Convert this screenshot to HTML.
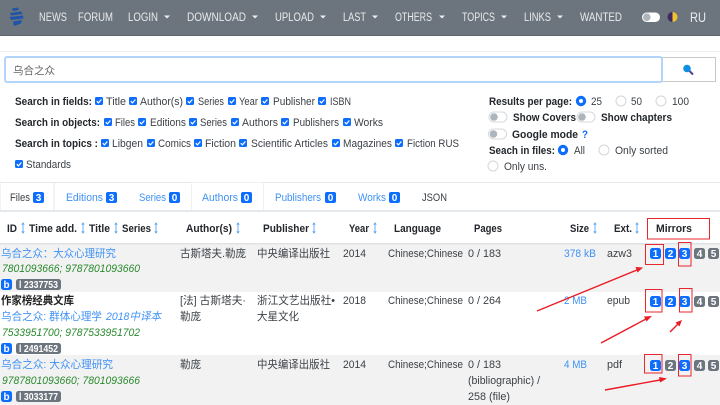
<!DOCTYPE html>
<html lang="zh">
<head>
<meta charset="utf-8">
<title>Library search</title>
<style>
html,body{margin:0;padding:0;background:#fff;width:720px;height:405px;overflow:hidden}
svg{display:block}
text{font-family:"Liberation Sans","Noto Sans CJK SC",sans-serif;font-size:11px;fill:#3c4146}
.n{fill:#e9ebed;font-size:11.5px}
.b{font-weight:bold;fill:#23272b}
.l{fill:#3f92f5}
.g{fill:#2a8a2f;font-style:italic}
.w{fill:#fff;font-weight:bold;font-size:10px;text-anchor:middle}
.h{fill:#3f92f5}
</style>
</head>
<body>
<svg width="720" height="405" viewBox="0 0 720 405" xmlns="http://www.w3.org/2000/svg">
<defs>
<g id="cb"><rect width="8" height="8" rx="1.5" fill="#0d6efd"/><path d="M1.8 4.2l1.6 1.7 3-3.4" stroke="#fff" stroke-width="1.2" fill="none"/></g>
<g id="s"><path d="M0 -5V5M-1.300 -3.400L0 -5L1.300 -3.400M-1.300 3.400L0 5L1.300 3.400" stroke="#5aa5f5" stroke-width="0.9" fill="none"/></g>
<g id="on"><circle r="5.2" fill="#0d6efd"/><circle r="2" fill="#fff"/></g>
<g id="off"><circle r="5" fill="#fff" stroke="#d4d6d9"/></g>
<g id="t"><rect width="18" height="10" rx="5" fill="#fff" stroke="#d6d8db"/><circle cx="5" cy="5" r="3.8" fill="#adb5bd"/></g>
</defs>

<!-- navbar -->
<rect width="720" height="35" fill="#6c757d"/>
<rect y="35" width="720" height="1" fill="#5f676e"/>
<path d="M12 8.5L18 7.5L19 10L13 11ZM10 13L21 11.5L22.5 14L11 15.5ZM9.5 17L23 15.5L23.5 18.5L11 20ZM13 21.5L22 20L21 23.5L14 26Z" fill="#1f54a8"/>
<text class="n" x="39" y="21" textLength="28" lengthAdjust="spacingAndGlyphs">NEWS</text>
<text class="n" x="78" y="21" textLength="35" lengthAdjust="spacingAndGlyphs">FORUM</text>
<text class="n" x="128" y="21" textLength="30" lengthAdjust="spacingAndGlyphs">LOGIN</text>
<path d="M164 15.5h6l-3 3z" fill="#eee"/>
<text class="n" x="187" y="21" textLength="59" lengthAdjust="spacingAndGlyphs">DOWNLOAD</text>
<path d="M252 15.5h6l-3 3z" fill="#eee"/>
<text class="n" x="275" y="21" textLength="39" lengthAdjust="spacingAndGlyphs">UPLOAD</text>
<path d="M320 15.5h6l-3 3z" fill="#eee"/>
<text class="n" x="343" y="21" textLength="23" lengthAdjust="spacingAndGlyphs">LAST</text>
<path d="M372 15.5h6l-3 3z" fill="#eee"/>
<text class="n" x="395" y="21" textLength="37" lengthAdjust="spacingAndGlyphs">OTHERS</text>
<path d="M439 15.5h6l-3 3z" fill="#eee"/>
<text class="n" x="462" y="21" textLength="33" lengthAdjust="spacingAndGlyphs">TOPICS</text>
<path d="M501 15.5h6l-3 3z" fill="#eee"/>
<text class="n" x="524" y="21" textLength="27" lengthAdjust="spacingAndGlyphs">LINKS</text>
<path d="M557 15.5h6l-3 3z" fill="#eee"/>
<text class="n" x="580" y="21" textLength="42" lengthAdjust="spacingAndGlyphs">WANTED</text>
<rect x="642" y="12.500" width="18" height="9.500" rx="4.750" fill="#fff"/>
<circle cx="646.800" cy="17.200" r="3.800" fill="#adb5bd"/>
<path d="M672.500 12a5 5 0 0 0 0 10z" fill="#3d2a63"/>
<path d="M672.500 12a5 5 0 0 1 0 10z" fill="#f2c230"/>
<text class="n" x="690" y="22" textLength="16" lengthAdjust="spacingAndGlyphs" style="font-size:14px">RU</text>

<!-- search -->
<rect y="51" width="720" height="1" fill="#eeeeee"/>
<rect x="662.500" y="57.500" width="53" height="24" fill="#fff" stroke="#c9c9c9"/>
<rect x="5" y="57" width="657" height="25" rx="2" fill="#fff" stroke="#b4d5fb" stroke-width="2"/>
<text x="13" y="74" textLength="42" style="font-size:10.5px;fill:#666">乌合之众</text>
<path d="M689.500 71l3.500 3.500" stroke="#5b3f96" stroke-width="2"/>
<circle cx="687" cy="68.500" r="3.800" fill="#0f8fe0"/>

<!-- fields -->
<text class="b" x="15" y="105" textLength="77" lengthAdjust="spacingAndGlyphs">Search in fields:</text>
<use href="#cb" x="95" y="97"/><text x="106" y="105" textLength="20" lengthAdjust="spacingAndGlyphs">Title</text>
<use href="#cb" x="129" y="97"/><text x="140" y="105" textLength="43" lengthAdjust="spacingAndGlyphs">Author(s)</text>
<use href="#cb" x="186" y="97"/><text x="198" y="105" textLength="26" lengthAdjust="spacingAndGlyphs">Series</text>
<use href="#cb" x="228" y="97"/><text x="239" y="105" textLength="19" lengthAdjust="spacingAndGlyphs">Year</text>
<use href="#cb" x="261" y="97"/><text x="273" y="105" textLength="42" lengthAdjust="spacingAndGlyphs">Publisher</text>
<use href="#cb" x="318" y="97"/><text x="330" y="105" textLength="21" lengthAdjust="spacingAndGlyphs">ISBN</text>

<text class="b" x="15" y="126" textLength="85" lengthAdjust="spacingAndGlyphs">Search in objects:</text>
<use href="#cb" x="104" y="118"/><text x="115" y="126" textLength="20" lengthAdjust="spacingAndGlyphs">Files</text>
<use href="#cb" x="138" y="118"/><text x="150" y="126" textLength="36" lengthAdjust="spacingAndGlyphs">Editions</text>
<use href="#cb" x="189" y="118"/><text x="200" y="126" textLength="27" lengthAdjust="spacingAndGlyphs">Series</text>
<use href="#cb" x="231" y="118"/><text x="242" y="126" textLength="36" lengthAdjust="spacingAndGlyphs">Authors</text>
<use href="#cb" x="281" y="118"/><text x="293" y="126" textLength="46" lengthAdjust="spacingAndGlyphs">Publishers</text>
<use href="#cb" x="343" y="118"/><text x="354" y="126" textLength="29" lengthAdjust="spacingAndGlyphs">Works</text>

<text class="b" x="15" y="147" textLength="83" lengthAdjust="spacingAndGlyphs">Search in topics :</text>
<use href="#cb" x="101" y="139"/><text x="112" y="147" textLength="31" lengthAdjust="spacingAndGlyphs">Libgen</text>
<use href="#cb" x="147" y="139"/><text x="158" y="147" textLength="33" lengthAdjust="spacingAndGlyphs">Comics</text>
<use href="#cb" x="194" y="139"/><text x="205" y="147" textLength="31" lengthAdjust="spacingAndGlyphs">Fiction</text>
<use href="#cb" x="239" y="139"/><text x="251" y="147" textLength="77" lengthAdjust="spacingAndGlyphs">Scientific Articles</text>
<use href="#cb" x="332" y="139"/><text x="343" y="147" textLength="49" lengthAdjust="spacingAndGlyphs">Magazines</text>
<use href="#cb" x="395" y="139"/><text x="407" y="147" textLength="52" lengthAdjust="spacingAndGlyphs">Fiction RUS</text>
<use href="#cb" x="15" y="160"/><text x="26" y="168" textLength="45" lengthAdjust="spacingAndGlyphs">Standards</text>

<text class="b" x="489" y="105" textLength="83" lengthAdjust="spacingAndGlyphs">Results per page:</text>
<use href="#on" x="581" y="101"/><text x="591" y="105" textLength="11" lengthAdjust="spacingAndGlyphs">25</text>
<use href="#off" x="621" y="101"/><text x="631" y="105" textLength="11" lengthAdjust="spacingAndGlyphs">50</text>
<use href="#off" x="661" y="101"/><text x="672" y="105" textLength="17" lengthAdjust="spacingAndGlyphs">100</text>
<use href="#t" x="489" y="112"/><text class="b" x="513" y="121" textLength="63" lengthAdjust="spacingAndGlyphs">Show Covers</text>
<use href="#t" x="577" y="112"/><text class="b" x="601" y="121" textLength="71" lengthAdjust="spacingAndGlyphs">Show chapters</text>
<use href="#t" x="488.500" y="129"/><text class="b" x="512" y="138" textLength="66" lengthAdjust="spacingAndGlyphs">Google mode</text>
<text class="b" x="582" y="138" style="fill:#0d6efd" textLength="6" lengthAdjust="spacingAndGlyphs">?</text>
<text class="b" x="489" y="154" textLength="66" lengthAdjust="spacingAndGlyphs">Seach in files:</text>
<use href="#on" x="563" y="150"/><text x="574" y="154" textLength="11" lengthAdjust="spacingAndGlyphs">All</text>
<use href="#off" x="604" y="150"/><text x="615" y="154" textLength="53" lengthAdjust="spacingAndGlyphs">Only sorted</text>
<use href="#off" x="493" y="166"/><text x="504" y="170" textLength="43" lengthAdjust="spacingAndGlyphs">Only uns.</text>

<!-- tabs -->
<rect y="182" width="720" height="1" fill="#e6e8ea"/>
<rect x="0" y="182.500" width="54" height="28" fill="#fff" stroke="#e6e8ea"/>
<rect x="191.500" y="182.500" width="72" height="28" fill="#fff" stroke="#eef0f1"/>
<rect y="210" width="720" height="2" fill="#e6e9ec"/>
<text x="10" y="201" textLength="20" lengthAdjust="spacingAndGlyphs">Files</text>
<rect x="33" y="192" width="11" height="11" rx="2" fill="#0d6efd"/><text class="w" x="38.500" y="201">3</text>
<text class="h" x="66" y="201" textLength="37" lengthAdjust="spacingAndGlyphs">Editions</text>
<rect x="106" y="192" width="11" height="11" rx="2" fill="#0d6efd"/><text class="w" x="111.500" y="201">3</text>
<text class="h" x="139" y="201" textLength="27" lengthAdjust="spacingAndGlyphs">Series</text>
<rect x="169" y="192" width="11" height="11" rx="2" fill="#0d6efd"/><text class="w" x="174.500" y="201">0</text>
<text class="h" x="202" y="201" textLength="36" lengthAdjust="spacingAndGlyphs">Authors</text>
<rect x="241" y="192" width="11" height="11" rx="2" fill="#0d6efd"/><text class="w" x="246.500" y="201">0</text>
<text class="h" x="275" y="201" textLength="46" lengthAdjust="spacingAndGlyphs">Publishers</text>
<rect x="325" y="192" width="11" height="11" rx="2" fill="#0d6efd"/><text class="w" x="330.500" y="201">0</text>
<text class="h" x="358" y="201" textLength="28" lengthAdjust="spacingAndGlyphs">Works</text>
<rect x="389" y="192" width="11" height="11" rx="2" fill="#0d6efd"/><text class="w" x="394.500" y="201">0</text>
<text x="422" y="201" textLength="25" lengthAdjust="spacingAndGlyphs">JSON</text>

<!-- table head -->
<text class="b" x="7" y="232" textLength="10" lengthAdjust="spacingAndGlyphs">ID</text><use href="#s" x="23" y="228"/>
<text class="b" x="29" y="232" textLength="48" lengthAdjust="spacingAndGlyphs">Time add.</text><use href="#s" x="83" y="228"/>
<text class="b" x="89" y="232" textLength="21" lengthAdjust="spacingAndGlyphs">Title</text><use href="#s" x="116" y="228"/>
<text class="b" x="122" y="232" textLength="29" lengthAdjust="spacingAndGlyphs">Series</text><use href="#s" x="156" y="228"/>
<text class="b" x="186" y="232" textLength="46" lengthAdjust="spacingAndGlyphs">Author(s)</text><use href="#s" x="238" y="228"/>
<text class="b" x="263" y="232" textLength="46" lengthAdjust="spacingAndGlyphs">Publisher</text><use href="#s" x="314" y="228"/>
<text class="b" x="349" y="232" textLength="20" lengthAdjust="spacingAndGlyphs">Year</text><use href="#s" x="375" y="228"/>
<text class="b" x="394" y="232" textLength="47" lengthAdjust="spacingAndGlyphs">Language</text>
<text class="b" x="474" y="232" textLength="28" lengthAdjust="spacingAndGlyphs">Pages</text>
<text class="b" x="570" y="232" textLength="19" lengthAdjust="spacingAndGlyphs">Size</text><use href="#s" x="595" y="228"/>
<text class="b" x="614" y="232" textLength="18" lengthAdjust="spacingAndGlyphs">Ext.</text><use href="#s" x="637" y="228"/>
<text class="b" x="656" y="232" textLength="36" lengthAdjust="spacingAndGlyphs">Mirrors</text>

<!-- rows -->
<rect y="243" width="720" height="49" fill="#f2f2f2"/>
<rect y="355" width="720" height="50" fill="#f2f2f2"/>
<rect y="243" width="720" height="1.500" fill="#dfe2e5"/>

<!-- row 1 -->
<text class="l" x="1" y="257" textLength="115" lengthAdjust="spacingAndGlyphs">乌合之众：大众心理研究</text>
<text class="g" x="2" y="272" textLength="138" lengthAdjust="spacingAndGlyphs">7801093666; 9787801093660</text>
<rect x="1" y="279" width="11" height="11" rx="2.500" fill="#0d6efd"/><text class="w" x="6.500" y="288">b</text>
<rect x="16" y="279" width="45" height="11" rx="2.500" fill="#6c757d"/><text class="w" x="38.500" y="288" textLength="39" lengthAdjust="spacingAndGlyphs">l 2337753</text>
<text x="180" y="257" textLength="66" lengthAdjust="spacingAndGlyphs">古斯塔夫.勒庞</text>
<text x="257" y="257" textLength="73" lengthAdjust="spacingAndGlyphs">中央编译出版社</text>
<text x="343" y="257" textLength="23" lengthAdjust="spacingAndGlyphs">2014</text>
<text x="388" y="257" textLength="75" lengthAdjust="spacingAndGlyphs">Chinese;Chinese</text>
<text x="468" y="257" textLength="33" lengthAdjust="spacingAndGlyphs">0 / 183</text>
<text class="l" x="564" y="257" textLength="32" lengthAdjust="spacingAndGlyphs">378 kB</text>
<text x="607" y="257" textLength="25" lengthAdjust="spacingAndGlyphs">azw3</text>

<!-- row 2 -->
<text x="1" y="304" textLength="73" lengthAdjust="spacingAndGlyphs" style="font-weight:bold;fill:#222">作家榜经典文库</text>
<text class="l" x="1" y="320" textLength="101" lengthAdjust="spacingAndGlyphs">乌合之众: 群体心理学</text>
<text class="l" x="106" y="320" textLength="55" lengthAdjust="spacingAndGlyphs" style="font-style:italic">2018中译本</text>
<text class="g" x="2" y="336" textLength="138" lengthAdjust="spacingAndGlyphs">7533951700; 9787533951702</text>
<rect x="1" y="343" width="11" height="11" rx="2.500" fill="#0d6efd"/><text class="w" x="6.500" y="352">b</text>
<rect x="16" y="343" width="45" height="11" rx="2.500" fill="#6c757d"/><text class="w" x="38.500" y="352" textLength="39" lengthAdjust="spacingAndGlyphs">l 2491452</text>
<text x="180" y="304" textLength="66" lengthAdjust="spacingAndGlyphs">[法] 古斯塔夫·</text>
<text x="180" y="320" textLength="21" lengthAdjust="spacingAndGlyphs">勒庞</text>
<text x="257" y="304" textLength="78" lengthAdjust="spacingAndGlyphs">浙江文艺出版社•</text>
<text x="257" y="320" textLength="42" lengthAdjust="spacingAndGlyphs">大星文化</text>
<text x="343" y="304" textLength="23" lengthAdjust="spacingAndGlyphs">2018</text>
<text x="388" y="304" textLength="75" lengthAdjust="spacingAndGlyphs">Chinese;Chinese</text>
<text x="468" y="304" textLength="33" lengthAdjust="spacingAndGlyphs">0 / 264</text>
<text class="l" x="564" y="304" textLength="23" lengthAdjust="spacingAndGlyphs">2 MB</text>
<text x="607" y="304" textLength="23" lengthAdjust="spacingAndGlyphs">epub</text>

<!-- row 3 -->
<text class="l" x="1" y="368" textLength="112" lengthAdjust="spacingAndGlyphs">乌合之众: 大众心理研究</text>
<text class="g" x="2" y="384" textLength="138" lengthAdjust="spacingAndGlyphs">9787801093660; 7801093666</text>
<rect x="1" y="391" width="11" height="11" rx="2.500" fill="#0d6efd"/><text class="w" x="6.500" y="400">b</text>
<rect x="16" y="391" width="45" height="11" rx="2.500" fill="#6c757d"/><text class="w" x="38.500" y="400" textLength="39" lengthAdjust="spacingAndGlyphs">l 3033177</text>
<text x="180" y="368" textLength="21" lengthAdjust="spacingAndGlyphs">勒庞</text>
<text x="257" y="368" textLength="73" lengthAdjust="spacingAndGlyphs">中央编译出版社</text>
<text x="343" y="368" textLength="23" lengthAdjust="spacingAndGlyphs">2014</text>
<text x="388" y="368" textLength="75" lengthAdjust="spacingAndGlyphs">Chinese;Chinese</text>
<text x="468" y="368" textLength="33" lengthAdjust="spacingAndGlyphs">0 / 183</text>
<text x="468" y="384" textLength="72" lengthAdjust="spacingAndGlyphs">(bibliographic) /</text>
<text x="468" y="400" textLength="42" lengthAdjust="spacingAndGlyphs">258 (file)</text>
<text class="l" x="564" y="368" textLength="23" lengthAdjust="spacingAndGlyphs">4 MB</text>
<text x="607" y="368" textLength="15" lengthAdjust="spacingAndGlyphs">pdf</text>

<!-- mirror badges row 1 -->
<rect x="650" y="248" width="11" height="11" rx="2.500" fill="#0d6efd"/><text class="w" x="655.500" y="257">1</text>
<rect x="665" y="248" width="11" height="11" rx="2.500" fill="#0d6efd"/><text class="w" x="670.500" y="257">2</text>
<rect x="679" y="248" width="11" height="11" rx="2.500" fill="#0d6efd"/><text class="w" x="684.500" y="257">3</text>
<rect x="694" y="248" width="11" height="11" rx="2.500" fill="#6c757d"/><text class="w" x="699.500" y="257">4</text>
<rect x="708" y="248" width="11" height="11" rx="2.500" fill="#6c757d"/><text class="w" x="713.500" y="257">5</text>
<!-- row 2 -->
<rect x="650" y="296" width="11" height="11" rx="2.500" fill="#0d6efd"/><text class="w" x="655.500" y="305">1</text>
<rect x="665" y="296" width="11" height="11" rx="2.500" fill="#0d6efd"/><text class="w" x="670.500" y="305">2</text>
<rect x="679" y="296" width="11" height="11" rx="2.500" fill="#0d6efd"/><text class="w" x="684.500" y="305">3</text>
<rect x="694" y="296" width="11" height="11" rx="2.500" fill="#6c757d"/><text class="w" x="699.500" y="305">4</text>
<rect x="708" y="296" width="11" height="11" rx="2.500" fill="#6c757d"/><text class="w" x="713.500" y="305">5</text>
<!-- row 3 -->
<rect x="650" y="360" width="11" height="11" rx="2.500" fill="#0d6efd"/><text class="w" x="655.500" y="369">1</text>
<rect x="665" y="360" width="11" height="11" rx="2.500" fill="#6c757d"/><text class="w" x="670.500" y="369">2</text>
<rect x="679" y="360" width="11" height="11" rx="2.500" fill="#0d6efd"/><text class="w" x="684.500" y="369">3</text>
<rect x="694" y="360" width="11" height="11" rx="2.500" fill="#6c757d"/><text class="w" x="699.500" y="369">4</text>
<rect x="708" y="360" width="11" height="11" rx="2.500" fill="#6c757d"/><text class="w" x="713.500" y="369">5</text>

<!-- red annotations -->
<g fill="none" stroke="#e8262d" stroke-width="1">
<rect x="647.500" y="218.500" width="62" height="20.500"/>
<rect x="645.500" y="244.500" width="18" height="20"/>
<rect x="678.500" y="242.500" width="12.500" height="23.500"/>
<rect x="645.500" y="289.500" width="16.500" height="22.500"/>
<rect x="679.500" y="288.500" width="12.500" height="23.500"/>
<rect x="644.500" y="354.500" width="17.500" height="18.500"/>
<rect x="678.500" y="354.500" width="12.500" height="21.500"/>
</g>
<g stroke="#ea1c24" stroke-width="1.400" fill="#ea1c24">
<path d="M537 311L637 270" fill="none"/><path d="M643 267.500L635.500 267L637.500 272.500Z" stroke="none"/>
<path d="M601 343L646 319" fill="none"/><path d="M652 316L644 316.500L646.500 321.500Z" stroke="none"/>
<path d="M670 332L678 324" fill="none"/><path d="M682 320L675.500 322.500L679.500 326.500Z" stroke="none"/>
<path d="M605 390L660 380" fill="none"/><path d="M667 378.500L659 377L660 382.500Z" stroke="none"/>
</g>
</svg>
</body>
</html>
